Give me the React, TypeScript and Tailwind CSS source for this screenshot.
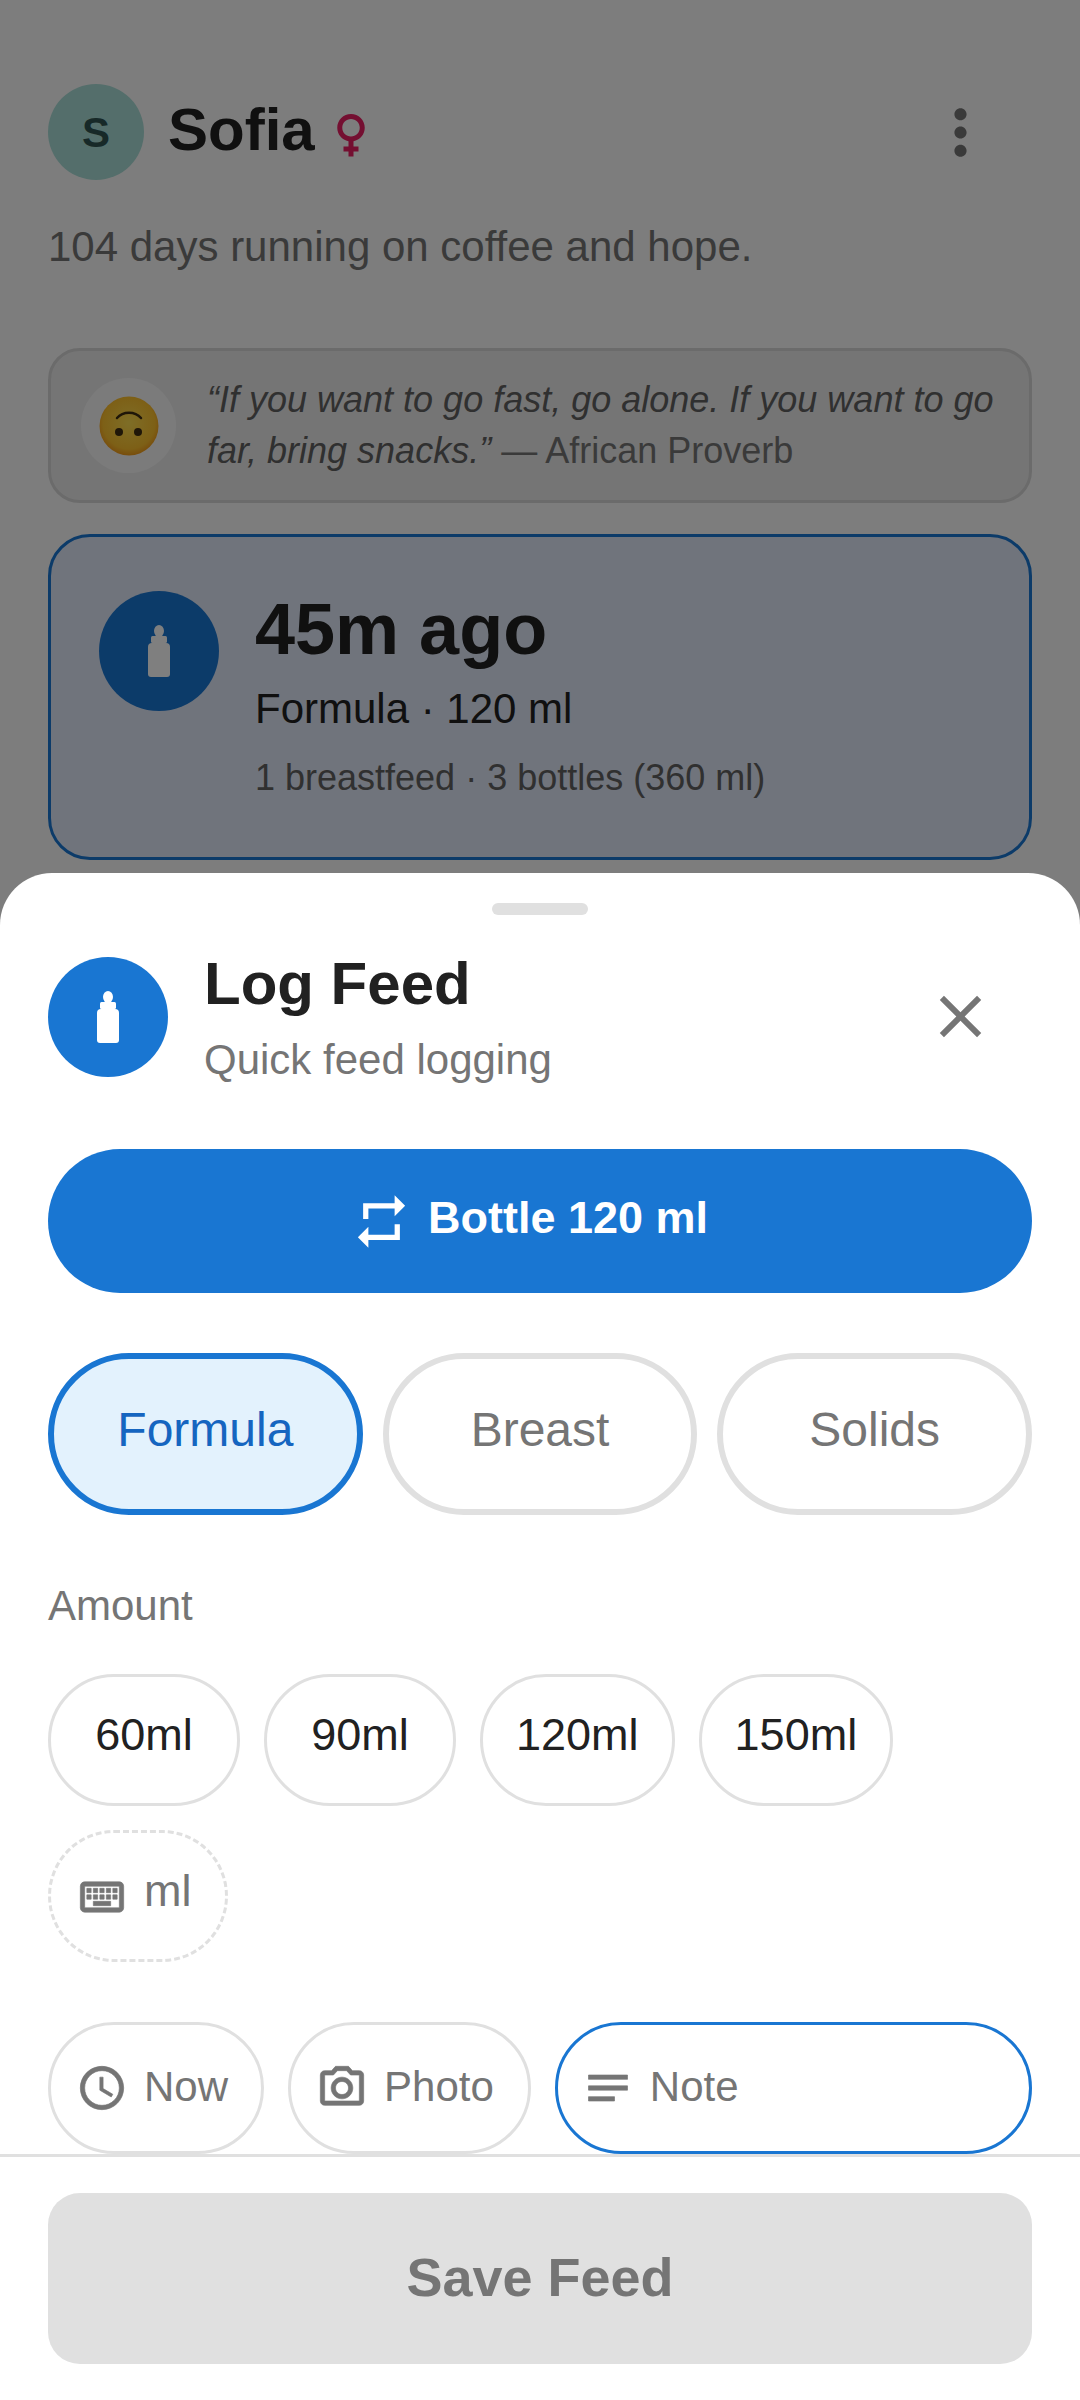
import { MdClose, MdFemale, MdMoreVert, MdRepeat } from "react-icons/md";

const amounts = ["60ml", "90ml", "120ml", "150ml"];

const keyboardPath =
  "M20 7v10H4V7h16m0-2H4c-1.1 0-1.99.9-1.99 2L2 17c0 1.1.9 2 2 2h16c1.1 0 2-.9 2-2V7c0-1.1-.9-2-2-2zm-9 3h2v2h-2zm0 3h2v2h-2zM8 8h2v2H8zm0 3h2v2H8zm-3 0h2v2H5zm0-3h2v2H5zm3 6h8v2H8zm6-3h2v2h-2zm0-3h2v2h-2zm3 3h2v2h-2zm0-3h2v2h-2z";
const clockPath =
  "M11.99 2C6.47 2 2 6.48 2 12s4.47 10 9.99 10C17.52 22 22 17.52 22 12S17.52 2 11.99 2zM12 20c-4.42 0-8-3.58-8-8s3.58-8 8-8 8 3.58 8 8-3.58 8-8 8zm.5-13H11v6l5.25 3.15.75-1.23-4.5-2.67z";
const cameraPath =
  "M20 4h-3.17L15 2H9L7.17 4H4c-1.1 0-2 .9-2 2v12c0 1.1.9 2 2 2h16c1.1 0 2-.9 2-2V6c0-1.1-.9-2-2-2zm0 14H4V6h4.05l1.83-2h4.24l1.83 2H20v12zM12 7c-2.76 0-5 2.24-5 5s2.24 5 5 5 5-2.24 5-5-2.24-5-5-5zm0 8c-1.65 0-3-1.35-3-3s1.35-3 3-3 3 1.35 3 3-1.35 3-3 3z";
const notesPath = "M3 18h12v-2H3v2zM3 6v2h18V6H3zm0 7h18v-2H3v2z";

function Glyph({ d, className }: { d: string; className?: string }) {
  return (
    <svg viewBox="0 0 24 24" width="52" height="52" fill="currentColor" stroke="currentColor" strokeWidth="0.3" className={className}>
      <path d={d} />
    </svg>
  );
}

function Bottle({ className }: { className?: string }) {
  return (
    <svg viewBox="0 0 22 52" width="22" height="52" className={className} fill="currentColor">
      <ellipse cx="11" cy="6" rx="5" ry="6" />
      <rect x="3" y="11" width="16" height="7" rx="1.5" />
      <path d="M4 18h14a4 4 0 0 1 4 4v27a3 3 0 0 1-3 3H3a3 3 0 0 1-3-3V22a4 4 0 0 1 4-4z" />
    </svg>
  );
}

function UpsideDownFace() {
  return (
    <svg viewBox="0 0 60 60" width="60" height="60">
      <defs>
        <radialGradient id="face" cx="50%" cy="45%" r="55%">
          <stop offset="0%" stopColor="#fddc4e" />
          <stop offset="80%" stopColor="#fbc02d" />
          <stop offset="100%" stopColor="#f09a1a" />
        </radialGradient>
      </defs>
      <circle cx="30" cy="30" r="29.5" fill="url(#face)" />
      <path d="M18 22c6-7 18-7 24 0" fill="none" stroke="#3e2c10" strokeWidth="2.5" strokeLinecap="round" />
      <circle cx="20" cy="36" r="4" fill="#3e2c10" />
      <circle cx="39" cy="36" r="4" fill="#3e2c10" />
    </svg>
  );
}

export default function App() {
  return (
    <div className="relative h-[2400px] w-[1080px] overflow-hidden bg-[#fafafa] font-['Liberation_Sans',sans-serif]">
      {/* page behind the sheet */}
      <div className="px-12 pt-[84px]">
        <div className="flex items-center pr-[35px]">
          <div className="flex h-24 w-24 items-center justify-center rounded-full bg-[#a8dcd6] text-[42px] font-bold text-[#2f5350]">S</div>
          <span className="mb-[5px] ml-[24px] text-[60px] leading-[70px] font-bold text-[#212121]">Sofia</span>
          <MdFemale size={60} className="mt-[4px] ml-[6px] text-[#e91e63]" />
          <MdMoreVert size={73} className="ml-auto text-[#757575]" />
        </div>
        <p className="mt-[42px] text-[42px] leading-[50px] text-[#757575]">104 days running on coffee and hope.</p>

        <div className="mt-[76px] flex h-[155px] items-center gap-[31px] rounded-[32px] border-[3px] border-[#d6d6d6] bg-[#ebebeb] pl-[30px]">
          <div className="flex h-[95px] w-[95px] shrink-0 items-center justify-center rounded-full bg-[#f7f7f7]">
            <UpsideDownFace />
          </div>
          <p className="-mt-[2px] text-[36px] leading-[51px] text-[#757575]">
            <em className="text-[#616161]">“If you want to go fast, go alone. If you want to go far, bring snacks.”</em> — African Proverb
          </p>
        </div>

        <div className="mt-[31px] flex h-[326px] items-start gap-9 rounded-[42px] border-[3px] border-[#1976d2] bg-[#e0e8f8] pt-[50px] pl-[48px]">
          <div className="mt-1 flex h-[120px] w-[120px] shrink-0 items-center justify-center rounded-full bg-[#1976d2] text-white">
            <Bottle />
          </div>
          <div>
            <div className="text-[72px] leading-[84px] font-bold text-[#212121]">45m ago</div>
            <div className="mt-[13px] text-[42px] leading-[50px] text-[#212121]">Formula · 120 ml</div>
            <div className="mt-[24px] text-[36px] leading-[40px] text-[#616161]">1 breastfeed · 3 bottles (360 ml)</div>
          </div>
        </div>
      </div>

      {/* scrim */}
      <div className="absolute inset-0 bg-black/50" />

      {/* bottom sheet */}
      <div className="absolute inset-x-0 bottom-0 flex h-[1527px] flex-col rounded-t-[52px] bg-white">
        <div className="mx-auto mt-[30px] h-3 w-24 shrink-0 rounded-full bg-[#e0e0e0]" />
        <div className="min-h-0 flex-1 px-12">
          <div className="mt-[42px] flex items-start pr-[36px]">
            <div className="flex h-[120px] w-[120px] shrink-0 items-center justify-center rounded-full bg-[#1976d2] text-white">
              <Bottle />
            </div>
            <div className="-mt-[3px] ml-[36px]">
              <div className="text-[60px] leading-[60px] font-bold text-[#212121]">Log Feed</div>
              <div className="mt-[21px] text-[42px] leading-[50px] text-[#757575]">Quick feed logging</div>
            </div>
            <MdClose size={71} className="mt-[24px] ml-auto text-[#757575]" />
          </div>

          <div className="mt-[64px] flex h-36 items-center justify-center gap-[15px] rounded-full bg-[#1976d2] pr-[22px] text-white">
            <MdRepeat size={63} />
            <span className="mb-[6px] text-[45px] leading-[52px] font-bold">Bottle 120 ml</span>
          </div>

          <div className="mt-[60px] flex gap-5">
            <div className="flex h-[162px] flex-1 items-center justify-center rounded-full border-[6px] border-[#1976d2] bg-[#e3f2fd] pb-2 text-[48px] text-[#1565c0]">Formula</div>
            <div className="flex h-[162px] flex-1 items-center justify-center rounded-full border-[6px] border-[#e0e0e0] pb-2 text-[48px] text-[#757575]">Breast</div>
            <div className="flex h-[162px] flex-1 items-center justify-center rounded-full border-[6px] border-[#e0e0e0] pb-2 text-[48px] text-[#757575]">Solids</div>
          </div>

          <div className="mt-[66px] text-[42px] leading-[50px] text-[#757575]">Amount</div>

          <div className="mt-[43px] flex flex-wrap gap-x-6 gap-y-6">
            {amounts.map((amount) => (
              <div key={amount} className="flex h-[132px] min-w-[192px] items-center justify-center rounded-full border-[3px] border-[#e0e0e0] px-[33px] pb-[10px] text-[45px] text-[#212121]">
                {amount}
              </div>
            ))}
            <div className="flex h-[132px] items-center gap-4 rounded-full border-[3px] border-dashed border-[#e0e0e0] pr-[34px] pl-[25px] text-[45px] text-[#757575]">
              <Glyph d={keyboardPath} className="mt-[2px]" />
              <span className="mb-[10px]">ml</span>
            </div>
          </div>

          <div className="mt-[60px] flex gap-6">
            <div className="flex h-[132px] items-center gap-4 rounded-full border-[3px] border-[#e0e0e0] pr-[33px] pl-[25px] text-[42px] text-[#757575]">
              <Glyph d={clockPath} />
              <span className="mb-[3px]">Now</span>
            </div>
            <div className="flex h-[132px] items-center gap-4 rounded-full border-[3px] border-[#e0e0e0] pr-[34px] pl-[25px] text-[42px] text-[#757575]">
              <Glyph d={cameraPath} />
              <span className="mb-[3px]">Photo</span>
            </div>
            <div className="flex h-[132px] flex-1 items-center gap-4 rounded-full border-[3px] border-[#1976d2] pl-[24px] text-[42px] text-[#757575]">
              <Glyph d={notesPath} />
              <span className="mb-[3px]">Note</span>
            </div>
          </div>
        </div>

        <div className="border-t-[3px] border-[#e0e0e0] px-12 py-9">
          <div className="flex h-[171px] items-center justify-center rounded-[32px] bg-[#e0e0e0] pb-[2px] text-[54px] font-bold text-[#757575]">Save Feed</div>
        </div>
      </div>
    </div>
  );
}
